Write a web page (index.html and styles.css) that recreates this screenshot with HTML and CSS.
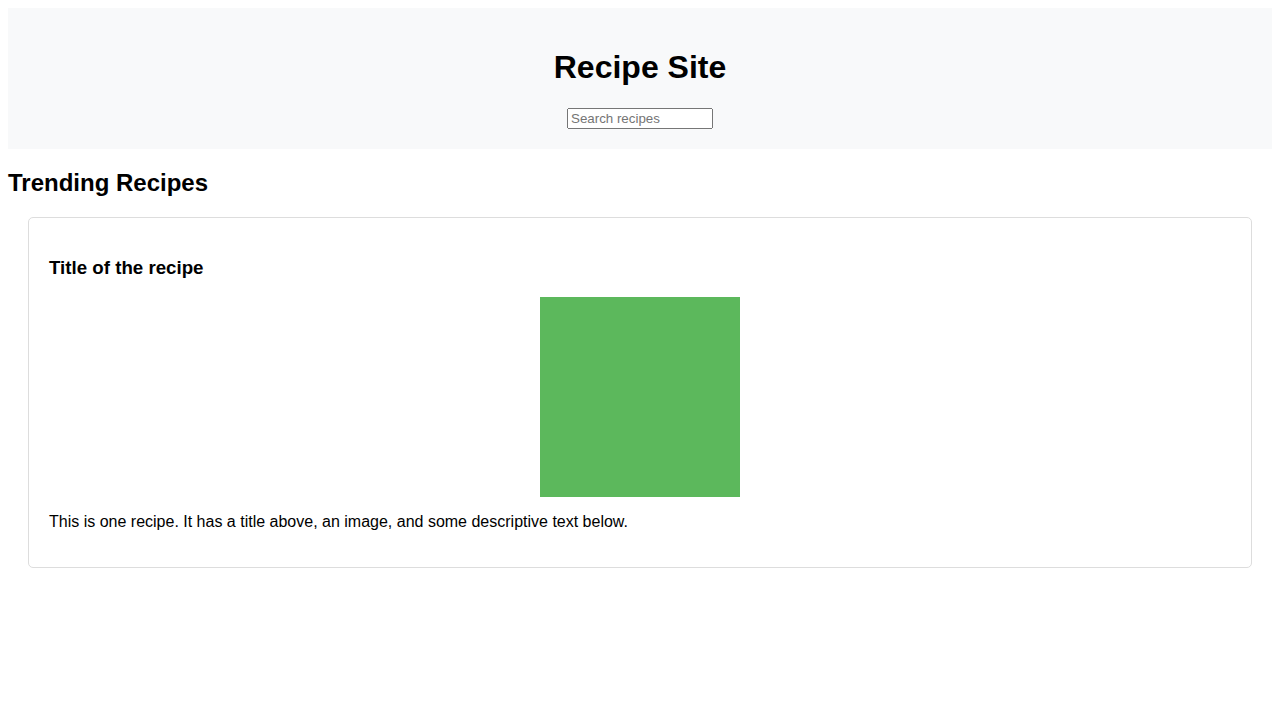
FILE: index.html
```html
<!DOCTYPE html>
<html lang="en">
<head>
<meta charset="utf-8">
<title>Recipe Site</title>
<link rel="stylesheet" href="styles.css">
</head>
<body>
<header class="site-header">
  <h1 class="site-title">Recipe Site</h1>
  <input class="search" type="text" placeholder="Search recipes">
</header>
<main>
  <h2 class="section-title">Trending Recipes</h2>
  <article class="recipe-card">
    <h3 class="recipe-title">Title of the recipe</h3>
    <div class="recipe-image"></div>
    <p class="recipe-text">This is one recipe. It has a title above, an image, and some descriptive text below.</p>
  </article>
</main>
</body>
</html>
```

FILE: styles.css
```css
body {
  margin: 8px;
  font-family: "Liberation Sans", Arial, sans-serif;
  color: #000;
  background: #fff;
}

.site-header {
  background: #f8f9fa;
  padding: 20px;
  text-align: center;
}

.site-title {
  font-size: 32px;
  margin: 21.44px 0;
}

.search {
  font-family: "Liberation Sans", Arial, sans-serif;
  font-size: 13.333px;
  width: 146px;
  box-sizing: border-box;
}

.section-title {
  font-size: 24px;
  margin: 19.92px 0;
}

.recipe-card {
  margin: 20px;
  padding: 20px;
  border: 1px solid #ddd;
  border-radius: 5px;
}

.recipe-title {
  font-size: 18.72px;
  margin: 18.72px 0;
}

.recipe-image {
  width: 200px;
  height: 200px;
  margin: 0 auto;
  background: #5cb85c;
}

.recipe-text {
  font-size: 16px;
  margin: 16px 0;
}
```
